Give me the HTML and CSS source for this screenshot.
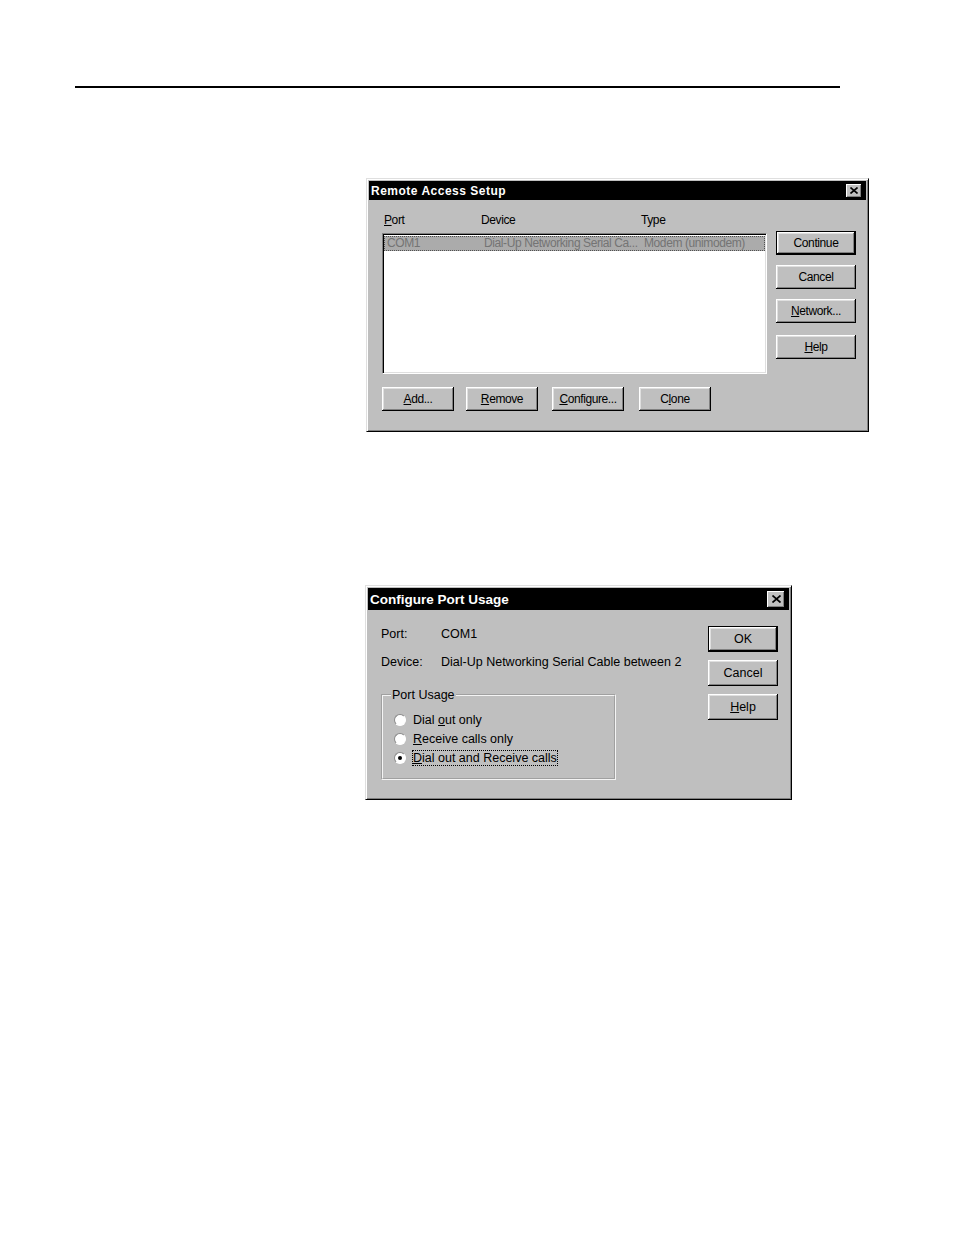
FILE: index.html
```html
<!DOCTYPE html>
<html>
<head>
<meta charset="utf-8">
<link rel="stylesheet" href="styles.css">
</head>
<body>
<div class="page">
  <div class="rule"></div>

  <div class="dlg dlg1">
    <div class="titlebar t1">
      <span class="title">Remote Access Setup</span>
      <span class="close c1"><svg width="8" height="7" viewBox="0 0 8 7"><path d="M0.5 0.5 L7.5 6.5 M7.5 0.5 L0.5 6.5" stroke="#000" stroke-width="1.6"/></svg></span>
    </div>
    <div class="d1-body">
      <div class="d1-left">
        <div class="heads cols"><span><u>P</u>ort</span><span>Device</span><span>Type</span></div>
        <div class="list">
          <div class="row sel cols"><span>COM1</span><span>Dial-Up Networking Serial Ca...</span><span>Modem (unimodem)</span></div>
        </div>
        <div class="d1-bottom">
          <div class="btn b1"><u>A</u>dd...</div>
          <div class="btn b1"><u>R</u>emove</div>
          <div class="btn b1 cfg"><u>C</u>onfigure...</div>
          <div class="btn b1 cln">C<u>l</u>one</div>
        </div>
      </div>
      <div class="d1-right">
        <div class="btn b1r def">Continue</div>
        <div class="btn b1r">Cancel</div>
        <div class="btn b1r"><u>N</u>etwork...</div>
        <div class="btn b1r help1"><u>H</u>elp</div>
      </div>
    </div>
  </div>

  <div class="dlg dlg2">
    <div class="titlebar t2">
      <span class="title">Configure Port Usage</span>
      <span class="close c2"><svg width="9" height="8" viewBox="0 0 9 8"><path d="M0.5 0.5 L8.5 7.5 M8.5 0.5 L0.5 7.5" stroke="#000" stroke-width="1.7"/></svg></span>
    </div>
    <div class="d2-body">
      <div class="d2-left">
        <div class="field"><span class="lab">Port:</span><span>COM1</span></div>
        <div class="field f2"><span class="lab">Device:</span><span>Dial-Up Networking Serial Cable between 2</span></div>
        <fieldset class="group">
          <legend>Port Usage</legend>
          <div class="radios">
            <div class="radio"><span class="dot"></span><span>Dial <u>o</u>ut only</span></div>
            <div class="radio"><span class="dot"></span><span><u>R</u>eceive calls only</span></div>
            <div class="radio"><span class="dot on"></span><span class="focus"><u>D</u>ial out and Receive calls</span></div>
          </div>
        </fieldset>
      </div>
      <div class="d2-right">
        <div class="btn b2 def">OK</div>
        <div class="btn b2">Cancel</div>
        <div class="btn b2"><u>H</u>elp</div>
      </div>
    </div>
  </div>
</div>
</body>
</html>
```

FILE: styles.css
```css
html, body {
  margin: 0;
  padding: 0;
  background: #fff;
}
.page {
  width: 954px;
  height: 1235px;
  overflow: hidden;
  font-family: "Liberation Sans", Arial, sans-serif;
  color: #000;
}
.rule {
  margin: 86px 0 0 75px;
  width: 765px;
  height: 2px;
  background: #000;
}
.dlg {
  box-sizing: border-box;
  background: #bfbfbf;
  border: 1px solid;
  border-color: #dfdfdf #000 #000 #dfdfdf;
  box-shadow: inset 1px 1px 0 #fff, inset -1px -1px 0 #808080;
  padding: 2px;
}
.dlg1 {
  margin: 90px 0 0 366px;
  width: 503px;
  height: 254px;
  font-size: 12px;
  letter-spacing: -0.4px;
}
.dlg2 {
  margin: 153px 0 0 365px;
  width: 427px;
  height: 215px;
  font-size: 12.5px;
}
.titlebar {
  background: #000;
  color: #fff;
  font-weight: bold;
  display: flex;
  align-items: center;
  justify-content: space-between;
  padding-left: 2px;
}
.t1 {
  height: 19px;
  font-size: 12px;
  letter-spacing: 0.5px;
}
.t2 {
  height: 22px;
  font-size: 13.5px;
}
.close {
  box-sizing: border-box;
  background: #c0c0c0;
  display: flex;
  align-items: center;
  justify-content: center;
  box-shadow: inset -1px -1px 0 #000, inset 1px 1px 0 #fff, inset -2px -2px 0 #808080;
}
.c1 { width: 16px; height: 14px; margin-right: 4px; }
.c2 { width: 18px; height: 17px; margin-right: 4px; }

u { text-decoration: underline; text-underline-offset: 1px; }

.btn {
  box-sizing: border-box;
  display: flex;
  align-items: center;
  justify-content: center;
  background: #bfbfbf;
  box-shadow: inset -1px -1px 0 #000, inset 1px 1px 0 #fff, inset -2px -2px 0 #808080, inset 2px 2px 0 #dfdfdf;
}
.btn.def {
  border: 1px solid #000;
}

/* dialog 1 */
.d1-body {
  display: flex;
  gap: 9px;
  padding: 13px 0 0 13px;
}
.d1-left { width: 385px; }
.cols {
  display: grid;
  grid-template-columns: 97px 160px 1fr;
}
.heads {
  height: 20px;
  line-height: 14px;
  padding-left: 2px;
}
.list {
  box-sizing: border-box;
  height: 141px;
  background: #fff;
  border: 1px solid;
  border-color: #808080 #fff #fff #808080;
  box-shadow: inset 1px 1px 0 #000, inset -1px -1px 0 #dfdfdf;
  padding: 2px 1px;
}
.row {
  box-sizing: border-box;
  height: 15px;
  line-height: 13px;
  padding-left: 2px;
  white-space: nowrap;
  overflow: hidden;
}
.row.sel {
  background: #ababab;
  color: #747474;
  border: 1px dotted #505050;
}
.d1-bottom {
  display: flex;
  gap: 12px;
  margin-top: 13px;
}
.cfg { margin-left: 2px; }
.cln { margin-left: 3px; }
.b1 { width: 72px; height: 24px; }
.d1-right {
  display: flex;
  flex-direction: column;
  gap: 10px;
  padding-top: 18px;
}
.b1r { width: 80px; height: 24px; }
.help1 { margin-top: 2px; }

/* dialog 2 */
.d2-body {
  display: flex;
  justify-content: space-between;
  padding: 16px 11px 0 13px;
}
.d2-left { width: 320px; }
.field {
  display: flex;
  line-height: 16px;
  white-space: nowrap;
}
.field .lab { width: 60px; }
.f2 { margin-top: 12px; }
.group {
  box-sizing: border-box;
  width: 235px;
  margin: 17px 0 0 0;
  padding: 0 0 11px 8px;
  border: 2px groove #f4f4f4;
  min-width: 0;
}
.group legend {
  padding: 0 1px;
  line-height: 16px;
}
.radios {
  margin: 7px 0 0 3px;
}
.radio {
  display: flex;
  align-items: center;
  gap: 7px;
  height: 19px;
  white-space: nowrap;
}
.dot {
  box-sizing: border-box;
  width: 12px;
  height: 12px;
  border-radius: 50%;
  background: #fff;
  border: 1px solid;
  border-color: #8a8a8a #fff #fff #8a8a8a;
  display: flex;
  align-items: center;
  justify-content: center;
}
.dot.on::after {
  content: "";
  width: 4px;
  height: 4px;
  border-radius: 50%;
  background: #000;
}
.focus {
  outline: 1px dotted #000;
  outline-offset: 0;
}
.d2-right {
  display: flex;
  flex-direction: column;
  gap: 8px;
}
.b2 { width: 70px; height: 26px; }
```
